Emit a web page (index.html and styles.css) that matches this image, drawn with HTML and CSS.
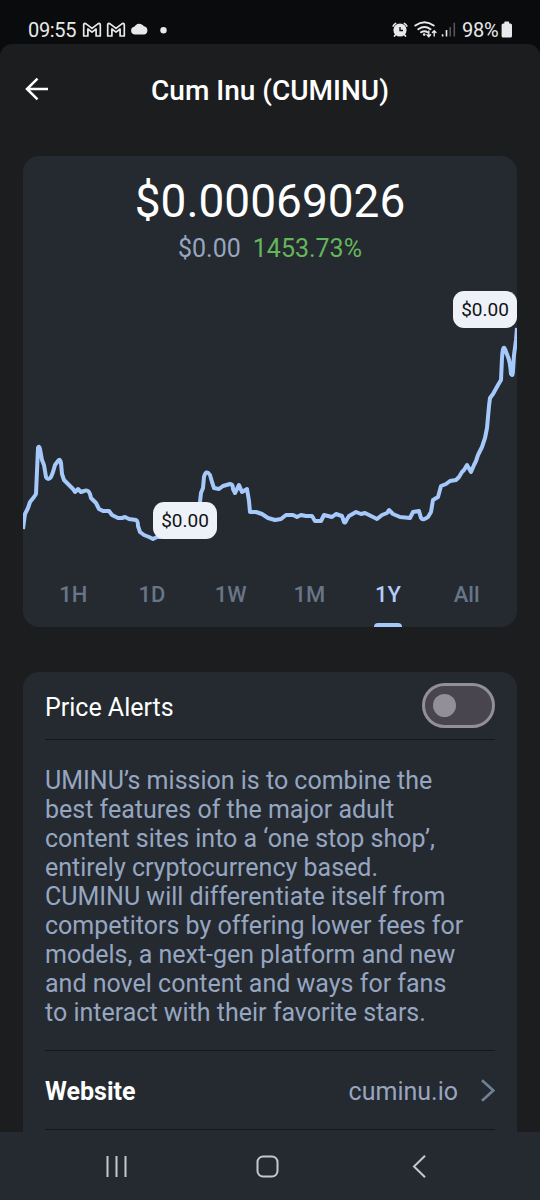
FILE: index.html
```
<!DOCTYPE html>
<html lang="en">
<head>
<meta charset="utf-8">
<title>Cum Inu (CUMINU)</title>
<link rel="stylesheet" href="styles.css">
</head>
<body>
<div class="phone">
  <header class="status">
    <span class="clock">09:55</span>
    <svg class="status-left" width="90" height="24" viewBox="80 18 90 24" fill="none" stroke="#e8e9ea" stroke-width="1.7" stroke-linejoin="round">
      <path id="mail" d="M83.700 24.600q0-1 1-1.200 1 0 1.800.7L92 28.400l5.500-4.300q.8-.7 1.800-.7 1 .2 1 1.200V36h-4.200v-7L92 32.200 87.900 29v7h-4.200z"/>
      <use href="#mail" x="24"/>
      <path d="M134.500 34.500a3.900 3.900 0 0 1-.2-7.700 5.600 5.600 0 0 1 9.600-.5 4.200 4.200 0 0 1 .4 8.200z" fill="#e8e9ea" stroke="none"/>
      <circle cx="163.500" cy="30.300" r="3.200" fill="#e8e9ea" stroke="none"/>
    </svg>
    <span class="spacer"></span>
    <svg class="status-right" width="66" height="24" viewBox="391 18 66 24" fill="none" stroke="#e8e9ea" stroke-linecap="round">
      <circle cx="400" cy="30" r="6.600" fill="#e8e9ea" stroke="none"/>
      <path d="M393.200 26q.8-1.800 2.400-2.500M406.800 26q-.8-1.800-2.400-2.500M395.800 34.500l-1.300 1.500M404.200 34.500l1.300 1.500" stroke-width="1.700"/>
      <path d="M400 27v3.500h3" stroke="#0a0b0d" stroke-width="1.300" stroke-linecap="butt"/>
      <path d="M415.300 25.600q9.200-6.800 18.400 0M418.300 29.200q6.200-4.400 12.200 0M421 32.300q3.400-2.200 6.500-.1" stroke-width="1.900"/>
      <circle cx="424.200" cy="34.600" r="1.300" fill="#e8e9ea" stroke="none"/>
      <path d="M428.800 31v5.500M427 34.800l1.800 1.900 1.800-1.900M434.200 36v-5M432.400 32.600l1.800-1.900 1.800 1.900" stroke-width="1.400"/>
      <path d="M442.600 34.300v2.200M446.500 30v6.500" stroke-width="1.600" stroke-linecap="butt"/>
      <path d="M450.200 27v9.500M454.300 22.700v13.800" stroke="#54565a" stroke-width="1.600" stroke-linecap="butt"/>
    </svg>
    <span class="battery-text">98%</span>
    <svg class="battery" width="12" height="24" viewBox="501 18 12 24"><path d="M504.300 22.400q0-.8.800-.8h3.300q.8 0 .8.800v1h1.200q1.600 0 1.600 1.600v11q0 1.600-1.600 1.600h-7.200q-1.600 0-1.600-1.600V25q0-1.600 1.600-1.600h1.100z" fill="#e8e9ea"/></svg>
  </header>

  <div class="app">
    <div class="topbar">
      <svg class="back" width="24" height="24" viewBox="25 77 24 24" fill="none" stroke="#fff" stroke-width="2.500"><path d="M48 89H27.500M37.500 78.600L27 89l10.500 10.400"/></svg>
      <h1 class="title">Cum Inu (CUMINU)</h1>
    </div>

    <section class="card chart-card">
      <div class="price">$0.00069026</div>
      <div class="change"><span>$0.00</span><span class="up">1453.73%</span></div>
      <div class="plot">
        <svg width="494" height="270" viewBox="23 280 494 270">
          <path class="line" d="M23 529L25 514L28 508L30 502L34 497L36 494L38 448Q39 445 40 449L42 460L44 465L46 477Q48 481 51 477L53 472L55 465L58 461Q60 458 61 463L62 474L64 480L68 484L71 487L73 489L75 492L78 489L81 492L84 491Q88 489 90 494L91 498L96 503L99 509L103 511L109 511L112 515L118 518L122 518L125 517L129 519L136 520Q138 521 138 526L140 532L144 535L149 537L153 539L157 537H170Q190 535 200 502L201 493L203 488L204 477Q206 469 210 475L212 482L214 488L219 489L223 486L230 484Q233 484 233 489L235 493L239 485L242 492L247 489L249 501L250 512L256 512L262 514L268 518L275 520L281 519L286 515L293 515L297 517L301 515L306 516L312 516L315 521L321 521L324 515L332 517L336 514L342 516L344 522Q345 524 347 519L349 516L356 512L361 514L365 513L371 516L377 519L382 515L387 513L389 510L393 514L400 517L410 518L413 512L419 511L421 518Q423 521 428 517L431 512L433 500L438 497L441 486L446 484L450 481L456 480L459 477L462 472L464 470L467 465L471 472L474 465L476 461L478 455L482 447L485 438L487 428L489 406L490 398L493 394L498 385L501 380L502 358Q503 344 505 349L508 357Q510 361 511 374Q513 377 513 370L514 355L516 340L517 328"/>
        </svg>
        <span class="tag tag-high">$0.00</span>
        <span class="tag tag-low">$0.00</span>
      </div>
      <nav class="ranges">
        <span>1H</span><span>1D</span><span>1W</span><span>1M</span><span class="active">1Y</span><span>All</span>
      </nav>
    </section>

    <section class="card info-card">
      <div class="row alerts"><span class="label">Price Alerts</span><span class="switch"><span class="knob"></span></span></div>
      <p class="about">UMINU’s mission is to combine the<br>best features of the major adult<br>content sites into a ‘one stop shop’,<br>entirely cryptocurrency based.<br>CUMINU will differentiate itself from<br>competitors by offering lower fees for<br>models, a next-gen platform and new<br>and novel content and ways for fans<br>to interact with their favorite stars.</p>
      <div class="row website"><span class="name">Website</span><span class="link">cuminu.io</span>
        <svg width="15" height="24" viewBox="480 1078 15 24" fill="none" stroke="#6f8195" stroke-width="2.600"><path d="M482 1080.200L493.300 1090.500L482 1100.800"/></svg>
      </div>
    </section>
  </div>

  <footer class="navbar">
    <svg width="540" height="68" viewBox="0 1132 540 68" fill="none" stroke="#c6c9cc" stroke-width="2">
      <path d="M107.500 1156v21M116.500 1156v21M125.500 1156v21"/>
      <rect x="257.500" y="1156.500" width="20" height="20" rx="5.500"/>
      <path d="M425 1155.800L414 1166.500L425 1177.200"/>
    </svg>
  </footer>
</div>
</body>
</html>
```

FILE: styles.css
```
* { box-sizing: border-box; }
body { margin: 0; background: #0a0b0d; font-family: Roboto, "Liberation Sans", sans-serif; }
.phone { width: 540px; height: 1200px; display: flex; flex-direction: column; overflow: hidden; }
svg { display: block; flex: none; }

.status { height: 44px; flex: none; display: flex; align-items: center; padding: 16px 27px 0 28px; color: #e8e9ea; font-size: 20px; }
.clock { width: 52px; letter-spacing: -0.35px; }
.spacer { flex: 1; }
.battery-text { width: 39px; margin-left: 5px; letter-spacing: -0.3px; }

.app { flex: 1; min-height: 0; overflow: hidden; background: #1c1d1e; border-radius: 12px 12px 0 0; padding: 0 23px; display: flex; flex-direction: column; }
.topbar { height: 112px; flex: none; display: flex; align-items: flex-start; padding: 33px 0 0 2px; }
.title { flex: 1; margin: -4px 27px 0 1px; text-align: center; color: #fff; font-size: 28px; line-height: 35px; font-weight: 500; white-space: nowrap; }

.card { background: #252a30; flex: none; }
.chart-card { height: 471px; border-radius: 16px; overflow: hidden; display: flex; flex-direction: column; }
.price { height: 74px; flex: none; padding-top: 17px; line-height: 56px; font-size: 46px; text-align: center; color: #fff; }
.change { height: 50px; flex: none; display: flex; justify-content: center; gap: 12px; line-height: 37px; font-size: 25px; color: #96a6c1; }
.up { color: #64b65b; }
.plot { position: relative; height: 270px; flex: none; }
.line { fill: none; stroke: #a6c9fb; stroke-width: 4; stroke-linejoin: round; stroke-linecap: butt; }
.tag { position: absolute; width: 64px; height: 37px; border-radius: 11px; background: #eef1f8; color: #111315; font-size: 19px; line-height: 38px; text-align: center; }
.tag-high { right: 0; top: 11px; }
.tag-low { left: 130px; top: 222px; }
.ranges { height: 77px; flex: none; display: grid; grid-template-columns: repeat(6, 1fr); padding: 12px 11px 0; font-size: 22px; line-height: 65px; font-weight: 500; text-align: center; color: #677587; }
.ranges .active { color: #b3cdfa; }
.ranges .active::after { content: ""; display: block; width: 28px; height: 4px; border-radius: 4px 4px 0 0; background: #a6c9fb; margin: -4px auto 0; }

.info-card { margin-top: 45px; height: 480px; border-radius: 16px 16px 0 0; padding: 0 22px; }
.row { display: flex; align-items: center; border-bottom: 1px solid #14171b; }
.alerts { height: 68px; justify-content: space-between; color: #fff; font-size: 25px; }
.label { padding-top: 4px; }
.switch { width: 73px; height: 45px; border-radius: 23px; border: 3px solid #938f99; background: #49454f; display: flex; align-items: center; padding-left: 8px; }
.knob { width: 23px; height: 23px; border-radius: 50%; background: #938f99; }
.about { margin: 0; height: 311px; padding-top: 26px; border-bottom: 1px solid #14171b; font-size: 25px; line-height: 29px; color: #96a6c1; white-space: nowrap; }
.website { height: 79px; font-size: 25px; }
.name { flex: 1; font-weight: 700; color: #fff; padding-top: 3px; }
.link { margin-right: 22px; color: #96a6c1; padding-top: 3px; }
.navbar { height: 68px; flex: none; background: #252a30; }
```
